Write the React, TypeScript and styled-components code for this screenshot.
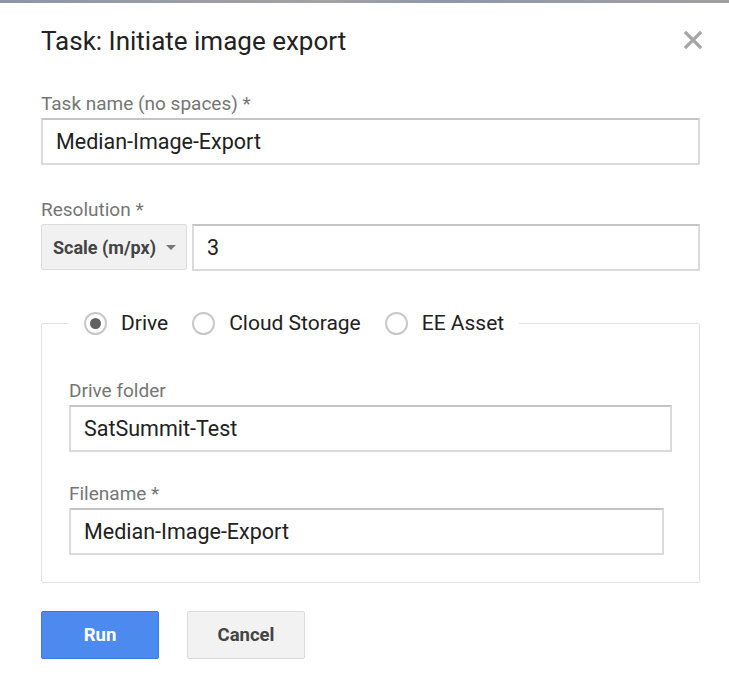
import React from "react";
import styled, { createGlobalStyle } from "styled-components";

const Global = createGlobalStyle`
  html, body { margin: 0; padding: 0; background: #fff; }
  body { font-family: Roboto, "Noto Sans", Arial, sans-serif; }
  * { box-sizing: border-box; }
`;

const TopStrip = styled.div`
  height: 3px;
  background: linear-gradient(90deg, #8d95a6 0%, #a3a3a3 45%, #8f97a8 60%, #a0a0a0 100%);
`;

const Dialog = styled.div`
  width: 729px;
  padding: 0 29px 0 41px;
  display: flex;
  flex-direction: column;
`;

const Header = styled.div`
  display: flex;
  align-items: flex-start;
  justify-content: space-between;
  padding-top: 23px;
`;

const Title = styled.h1`
  margin: 0;
  font-family: Roboto, sans-serif;
  font-weight: 400;
  font-size: 26px;
  line-height: 30px;
  color: #222;
`;

const Close = styled.button`
  border: 0;
  background: none;
  padding: 0;
  width: 20px;
  height: 20px;
  margin-right: -3px;
  margin-top: 4px;
  cursor: pointer;
  display: flex;
`;

const Field = styled.div<{ $mt?: number }>`
  display: flex;
  flex-direction: column;
  margin-top: ${(p) => p.$mt ?? 0}px;
`;

const Label = styled.label`
  font-size: 19px;
  color: #757575;
  line-height: 22px;
  margin-bottom: 3px;
`;

const TextInput = styled.input<{ $w?: number }>`
  height: 47px;
  width: ${(p) => (p.$w ? `${p.$w}px` : "100%")};
  border-style: solid;
  border-width: 2px;
  border-color: #c4c4c4 #dadada #dadada #dadada;
  padding: 0 13px;
  font-family: Roboto, sans-serif;
  font-size: 21.5px;
  color: #212121;
  outline: none;
  background: #fff;
`;

const Row = styled.div`
  display: flex;
  gap: 5px;
`;

const Select = styled.div`
  width: 146px;
  flex: none;
  height: 46px;
  background: #f1f1f1;
  border: 1px solid #dcdcdc;
  border-radius: 2px;
  display: flex;
  align-items: center;
  padding: 0 0 0 11px;
  gap: 10px;
  font-weight: 700;
  font-size: 18px;
  color: #444;
`;

const Caret = styled.span`
  width: 0;
  height: 0;
  border-left: 5px solid transparent;
  border-right: 5px solid transparent;
  border-top: 5px solid #777;
  margin-top: 1px;
`;

const Fieldset = styled.fieldset`
  margin: 39px 0 0;
  padding: 0 27px 27px 27px;
  border: 1px solid #e3e3e3;
  border-radius: 2px;
  min-width: 0;
`;

const Legend = styled.legend`
  display: flex;
  align-items: center;
  height: 26px;
  margin-left: 0;
  padding: 0 15px;
`;

const RadioOpt = styled.label`
  display: flex;
  align-items: center;
  gap: 14px;
  font-size: 21px;
  line-height: 26px;
  color: #212121;
  margin-right: 24px;
  &:last-child { margin-right: 0; }
`;

const RadioCircle = styled.span<{ $on?: boolean }>`
  width: 23px;
  height: 23px;
  border-radius: 50%;
  border: 2px solid #c8c8c8;
  display: flex;
  align-items: center;
  justify-content: center;
  &::after {
    content: "";
    display: ${(p) => (p.$on ? "block" : "none")};
    width: 11px;
    height: 11px;
    border-radius: 50%;
    background: #616161;
  }
`;

const Buttons = styled.div`
  display: flex;
  gap: 28px;
  margin-top: 28px;
`;

const Btn = styled.button<{ $primary?: boolean }>`
  width: 118px;
  height: 48px;
  border-radius: 2px;
  font-family: Roboto, sans-serif;
  font-weight: 700;
  font-size: 18.5px;
  cursor: pointer;
  border: 1px solid ${(p) => (p.$primary ? "#3b78e7" : "#dcdcdc")};
  background: ${(p) => (p.$primary ? "#4d8af0" : "#f2f2f2")};
  color: ${(p) => (p.$primary ? "#fff" : "#444")};
`;

export default function App() {
  return (
    <>
      <Global />
      <TopStrip />
      <Dialog>
        <Header>
          <Title>Task: Initiate image export</Title>
          <Close aria-label="Close">
            <svg width="20" height="20" viewBox="0 0 20 20">
              <path d="M3 3 L17 17 M17 3 L3 17" stroke="#a6a6a6" strokeWidth="3.2" strokeLinecap="square" />
            </svg>
          </Close>
        </Header>
        <Field $mt={37}>
          <Label>Task name (no spaces) *</Label>
          <TextInput defaultValue="Median-Image-Export" />
        </Field>
        <Field $mt={34}>
          <Label>Resolution *</Label>
          <Row>
            <Select>
              Scale (m/px) <Caret />
            </Select>
            <TextInput defaultValue="3" />
          </Row>
        </Field>
        <Fieldset>
          <Legend>
            <RadioOpt>
              <RadioCircle $on /> Drive
            </RadioOpt>
            <RadioOpt>
              <RadioCircle /> Cloud Storage
            </RadioOpt>
            <RadioOpt>
              <RadioCircle /> EE Asset
            </RadioOpt>
          </Legend>
          <Field $mt={44}>
            <Label>Drive folder</Label>
            <TextInput $w={603} defaultValue="SatSummit-Test" />
          </Field>
          <Field $mt={31}>
            <Label>Filename *</Label>
            <TextInput $w={595} defaultValue="Median-Image-Export" />
          </Field>
        </Fieldset>
        <Buttons>
          <Btn $primary>Run</Btn>
          <Btn>Cancel</Btn>
        </Buttons>
      </Dialog>
    </>
  );
}
